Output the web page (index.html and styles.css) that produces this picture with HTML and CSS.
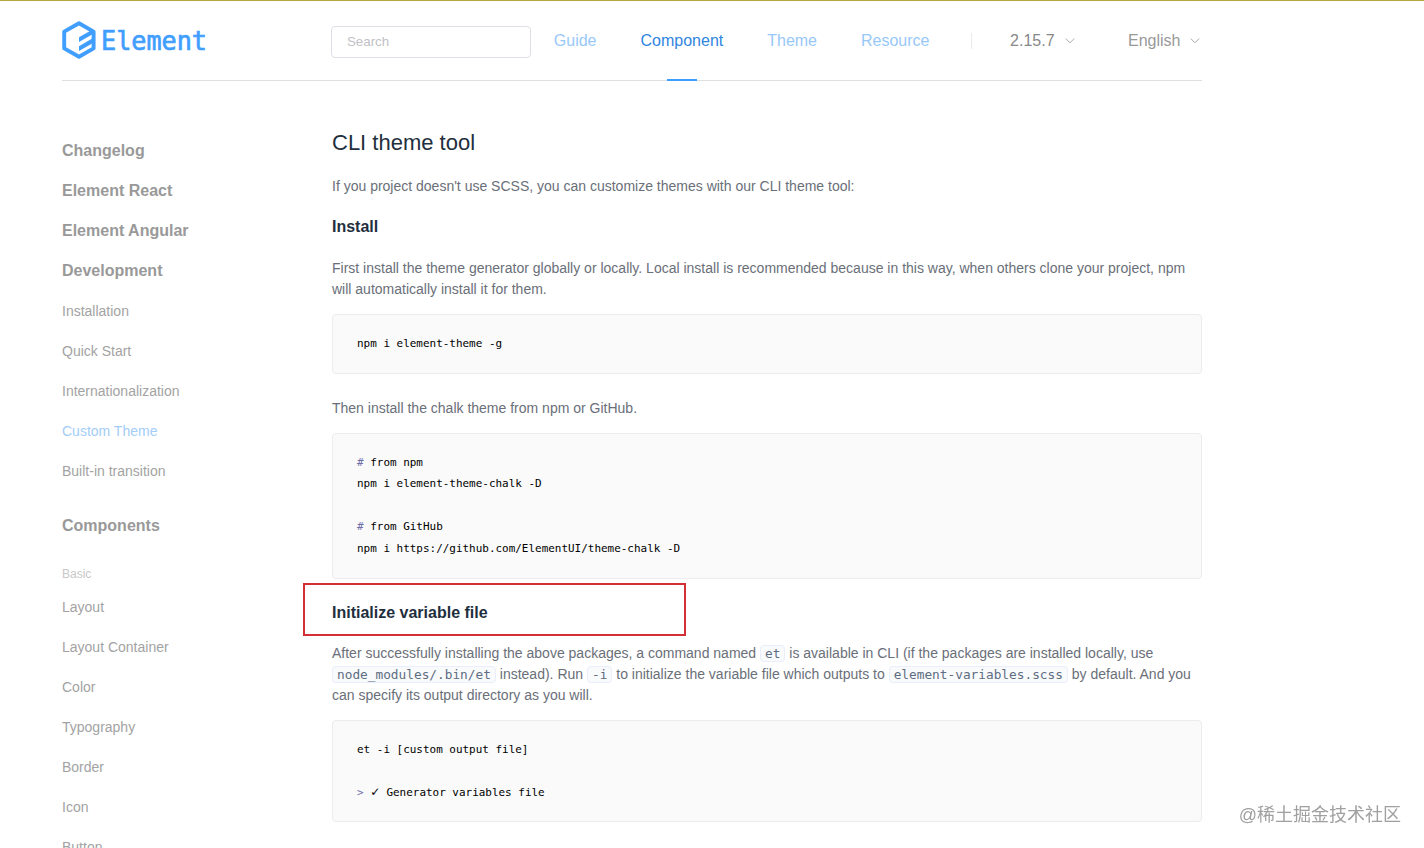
FILE: index.html
```
<!DOCTYPE html>
<html lang="en">
<head>
    <meta charset="UTF-8">
    <meta name="viewport" content="width=device-width, initial-scale=1.0">
    <title>Element</title>
    <link rel="stylesheet" href="styles.css">
</head>
<body>
    <div class="container">
        <header class="header">
            <a class="logo">
                <svg class="logo-mark" width="34" height="38" viewBox="0 0 34 38">
                    <path d="M17 2.2 L31.6 10.6 V27.4 L17 35.8 L2.2 27.4 V10.6 Z" fill="none" stroke="#409eff" stroke-width="3.9" stroke-linejoin="round"/>
                    <path d="M17 16.3 L31 8.2 V13 L17 21.1 Z M17 25.2 L31 17.1 V21.9 L17 30 Z" fill="#409eff"/>
                </svg>
                <svg class="logo-text" width="112" height="34" viewBox="0 0 112 34">
                    <text x="0" y="27" textLength="106" lengthAdjust="spacingAndGlyphs">Element</text>
                </svg>
            </a>
            <input class="search" type="text" placeholder="Search">
            <nav class="nav">
                <a class="nav-item">Guide</a>
                <a class="nav-item active">Component</a>
                <a class="nav-item">Theme</a>
                <a class="nav-item">Resource</a>
            </nav>
            <div class="divider"></div>
            <div class="dropdown version">2.15.7
                <svg width="10" height="6" viewBox="0 0 10 6"><path d="M0.8 0.6 L5 4.8 L9.2 0.6"/></svg>
            </div>
            <div class="dropdown lang">English
                <svg width="10" height="6" viewBox="0 0 10 6"><path d="M0.8 0.6 L5 4.8 L9.2 0.6"/></svg>
            </div>
        </header>
        <div class="page">
            <aside class="side-nav">
                <a class="title">Changelog</a>
                <a class="title">Element React</a>
                <a class="title">Element Angular</a>
                <a class="title">Development</a>
                <a class="item">Installation</a>
                <a class="item">Quick Start</a>
                <a class="item">Internationalization</a>
                <a class="item active">Custom Theme</a>
                <a class="item">Built-in transition</a>
                <a class="title components">Components</a>
                <div class="group">Basic</div>
                <a class="item">Layout</a>
                <a class="item">Layout Container</a>
                <a class="item">Color</a>
                <a class="item">Typography</a>
                <a class="item">Border</a>
                <a class="item">Icon</a>
                <a class="item">Button</a>
            </aside>
            <main class="content">
                <h2>CLI theme tool</h2>
                <p>If you project doesn't use SCSS, you can customize themes with our CLI theme tool:</p>
                <h3>Install</h3>
                <p>First install the theme generator globally or locally. Local install is recommended because in this way, when others clone your project, npm will automatically install it for them.</p>
                <pre>npm i element-theme -g</pre>
                <p>Then install the chalk theme from npm or GitHub.</p>
                <pre><span class="meta">#</span> from npm
npm i element-theme-chalk -D

<span class="meta">#</span> from GitHub
npm i https://github.com/ElementUI/theme-chalk -D</pre>
                <h3 class="marked">Initialize variable file<span class="mark-box"></span></h3>
                <p>After successfully installing the above packages, a command named <code>et</code> is available in CLI (if the packages are installed locally, use <code>node_modules/.bin/et</code> instead). Run <code>-i</code> to initialize the variable file which outputs to <code>element-variables.scss</code> by default. And you can specify its output directory as you will.</p>
                <pre>et -i [custom output file]

<span class="meta">&gt;</span> <span class="check">✓</span> Generator variables file</pre>
            </main>
        </div>
    </div>
    <div class="watermark">@稀土掘金技术社区</div>
</body>
</html>
```
FILE: styles.css
```
* {
    box-sizing: border-box;
}
body {
    margin: 0;
    height: 848px;
    overflow: hidden;
    border-top: 1px solid #b8a93a;
    background: #fff;
    font-family: "Liberation Sans", Arial, sans-serif;
}
.container {
    width: 1140px;
    margin-left: 62px;
}
.header {
    display: flex;
    align-items: center;
    height: 80px;
    border-bottom: 1px solid #dfdfdf;
}
.logo {
    display: flex;
    align-items: center;
    width: 269px;
    padding-bottom: 2px;
}
.logo-mark {
    flex: none;
}
.logo-text {
    flex: none;
    margin-left: 5px;
}
.logo-text text {
    font-family: "DejaVu Sans Mono", monospace;
    font-size: 27px;
    fill: #409eff;
    stroke: #409eff;
    stroke-width: 0.7px;
}
.search {
    width: 200px;
    height: 32px;
    margin-top: 3px;
    padding: 0 15px 2px;
    border: 1px solid #dcdfe6;
    border-radius: 4px;
    font-family: inherit;
    font-size: 13.3px;
}
.search::placeholder {
    color: #bfc1c6;
}
.nav {
    display: flex;
    height: 80px;
    margin-left: 0.8px;
}
.nav-item {
    padding: 0 22px;
    line-height: 80px;
    font-size: 16px;
    color: #98c8f8;
}
.nav-item.active {
    display: flex;
    flex-direction: column;
    align-items: center;
    color: #2f85e0;
}
.nav-item.active::after {
    content: "";
    width: 30px;
    height: 2px;
    margin-top: -2px;
    background: #409eff;
}
.divider {
    width: 1px;
    height: 16px;
    margin-left: 19.6px;
    background: #ebebeb;
}
.dropdown {
    display: flex;
    align-items: center;
    gap: 10px;
    font-size: 16px;
    color: #888;
}
.dropdown path {
    fill: none;
    stroke: #aaa;
}
.version {
    margin-left: 38px;
}
.lang {
    margin-left: 53.4px;
    color: #999;
}
.page {
    display: flex;
}
.side-nav {
    width: 270px;
    padding-top: 50px;
}
.side-nav a {
    display: block;
    height: 40px;
    line-height: 40px;
}
.side-nav .title {
    font-size: 16px;
    font-weight: bold;
    color: #999;
}
.side-nav .item {
    font-size: 14px;
    color: #a3a3a3;
}
.side-nav .item.active {
    color: #a3cdf8;
}
.side-nav .components {
    margin-top: 15px;
}
.group {
    height: 26px;
    margin-top: 15px;
    line-height: 26px;
    font-size: 12px;
    color: #c8c8c8;
}
.content {
    width: 870px;
    padding-top: 47px;
}
h2 {
    margin: 0 0 18px;
    line-height: 30px;
    font-size: 22px;
    font-weight: normal;
    color: #1f2f3d;
}
h3 {
    margin: 18px 0 19px;
    line-height: 24px;
    font-size: 16px;
    color: #1f2f3d;
}
p {
    margin: 0 0 14px;
    line-height: 21px;
    font-size: 14px;
    color: #6a6f79;
}
pre {
    margin: 0 0 24px;
    padding: 18px 24px;
    border: 1px solid #ececee;
    border-radius: 4px;
    background: #fafafa;
    line-height: 21.6px;
    font-family: "DejaVu Sans Mono", monospace;
    font-size: 10.96px;
    color: #000;
}
code {
    padding: 0 4px;
    border: 1px solid #eaeefb;
    border-radius: 4px;
    background: #f9fafc;
    line-height: 1;
    font-family: "DejaVu Sans Mono", monospace;
    font-size: 12.79px;
    color: #5e6d82;
}
.meta {
    color: #7070a8;
}
.check {
    display: inline-block;
    width: 9.6px;
    line-height: 1;
    font-family: "DejaVu Sans", sans-serif;
    font-size: 12px;
    font-weight: bold;
}
.marked {
    position: relative;
    margin-top: -2px;
    margin-bottom: 18px;
}
/* red frame around the heading */
.mark-box {
    position: absolute;
    top: -18px;
    left: -29px;
    width: 383px;
    height: 53px;
    border: 2px solid #d42f35;
}
.watermark {
    position: fixed;
    right: 23px;
    bottom: 19px;
    line-height: 28px;
    font-family: "Liberation Sans", "Noto Sans CJK SC", sans-serif;
    font-size: 18px;
    color: #a0a0a0;
}
```
